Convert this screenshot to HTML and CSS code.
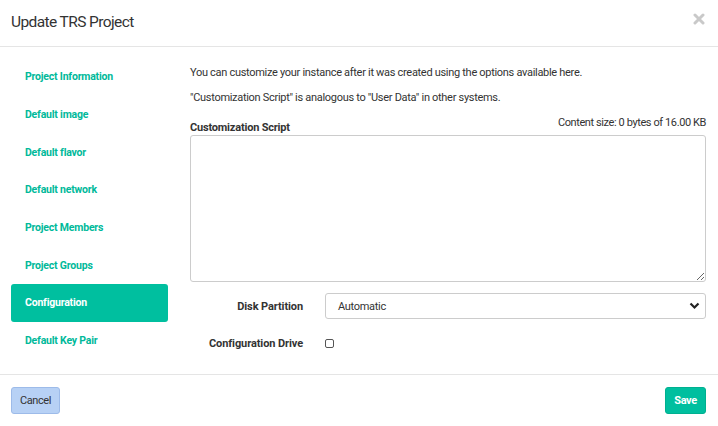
FILE: index.html
```html
<!DOCTYPE html>
<html>
<head>
<meta charset="utf-8">
<link rel="stylesheet" href="styles.css">
</head>
<body>
<div class="modal">
  <div class="modal-header">
    <h4 class="title">Update TRS Project</h4>
    <svg class="close" width="12" height="12" viewBox="0 0 12 12"><path d="M2 2 L10 10 M10 2 L2 10" stroke="#c9c9c9" stroke-width="3" stroke-linecap="round"/></svg>
  </div>
  <div class="modal-body">
    <ul class="nav">
      <li><a>Project Information</a></li>
      <li><a>Default image</a></li>
      <li><a>Default flavor</a></li>
      <li><a>Default network</a></li>
      <li><a>Project Members</a></li>
      <li><a>Project Groups</a></li>
      <li class="active"><a>Configuration</a></li>
      <li><a>Default Key Pair</a></li>
    </ul>
    <div class="content">
      <p class="help">You can customize your instance after it was created using the options available here.</p>
      <p class="help">"Customization Script" is analogous to "User Data" in other systems.</p>
      <div class="script-head">
        <label class="lbl">Customization Script</label>
        <span class="size">Content size: 0 bytes of 16.00 KB</span>
      </div>
      <textarea class="script"></textarea>
      <div class="row">
        <label class="rlbl">Disk Partition</label>
        <div class="select">
          <span>Automatic</span>
          <svg width="11" height="8" viewBox="0 0 11 8"><path d="M1.5 1.5 L5.5 5.5 L9.5 1.5" fill="none" stroke="#222" stroke-width="2.2"/></svg>
        </div>
      </div>
      <div class="row row2">
        <label class="rlbl">Configuration Drive</label>
        <span class="check"></span>
      </div>
    </div>
  </div>
  <div class="modal-footer">
    <button class="btn cancel">Cancel</button>
    <button class="btn save">Save</button>
  </div>
</div>
</body>
</html>
```
FILE: styles.css
```css
* { box-sizing: border-box; }
html, body { margin: 0; padding: 0; background: #fff; }
body {
  font-family: "Roboto", "Liberation Sans", sans-serif;
  font-size: 11px;
  color: #333;
  width: 718px;
  height: 426px;
  overflow: hidden;
  letter-spacing: -0.3px;
}
.modal { width: 718px; height: 426px; display: flex; flex-direction: column; }
.modal-header {
  flex: 0 0 47px;
  border-bottom: 1px solid #e5e5e5;
  display: flex;
  align-items: flex-start;
  justify-content: space-between;
  padding: 12px 13px 0 11px;
}
.title { margin: 0; font-size: 15.5px; line-height: 20px; font-weight: normal; color: #333; letter-spacing: -0.6px; }
.close { margin-top: 1px; }
.modal-body { flex: 1; display: flex; padding: 0 12px 0 11px; }
.nav { list-style: none; margin: 0; padding: 0; width: 157px; padding-top: 11px; }
.nav li { height: 37.7px; display: flex; align-items: center; padding-left: 14px; border-radius: 3px; }
.nav li a { color: #00b99a; font-weight: bold; font-size: 10.5px; letter-spacing: -0.2px; }
.nav li.active { background: #00bf9f; }
.nav li.active a { color: #fff; }
.content { flex: 1; margin-left: 22px; padding-top: 20px; }
.help { margin: 0 0 13px 0; line-height: 12px; }
.script-head { display: flex; justify-content: space-between; height: 17px; }
.lbl { font-weight: bold; align-self: flex-end; line-height: 12px; letter-spacing: -0.2px; }
.size { line-height: 12px; letter-spacing: -0.4px; }
.script { display: block; width: 516px; height: 147px; margin-top: 1px; border: 1px solid #ccc; border-radius: 3px; resize: vertical; }
.row { display: flex; align-items: center; margin-top: 11px; }
.rlbl { width: 113px; text-align: right; font-weight: bold; margin-right: 22px; letter-spacing: -0.1px; }
.select {
  width: 381px; height: 26px; border: 1px solid #ccc; border-radius: 3px;
  display: flex; justify-content: space-between; align-items: center; padding: 0 5px 0 12px; color: #333;
}
.row2 { margin-top: 18px; }
.check { width: 9px; height: 9px; border: 1px solid #555; border-radius: 2px; }
.modal-footer {
  flex: 0 0 52px; border-top: 1px solid #e5e5e5; display: flex; justify-content: space-between; align-items: center;
  padding: 0 12px 0 11px;
}
.btn { font-family: inherit; font-size: 11px; border-radius: 3px; height: 27px; padding: 0; letter-spacing: -0.4px; }
.cancel { background: #b7d1f5; border: 1px solid #9dbbe9; color: #333; width: 49px; }
.save { background: #00bf9f; border: 1px solid #00b090; color: #fff; width: 41px; font-weight: bold; }
```
